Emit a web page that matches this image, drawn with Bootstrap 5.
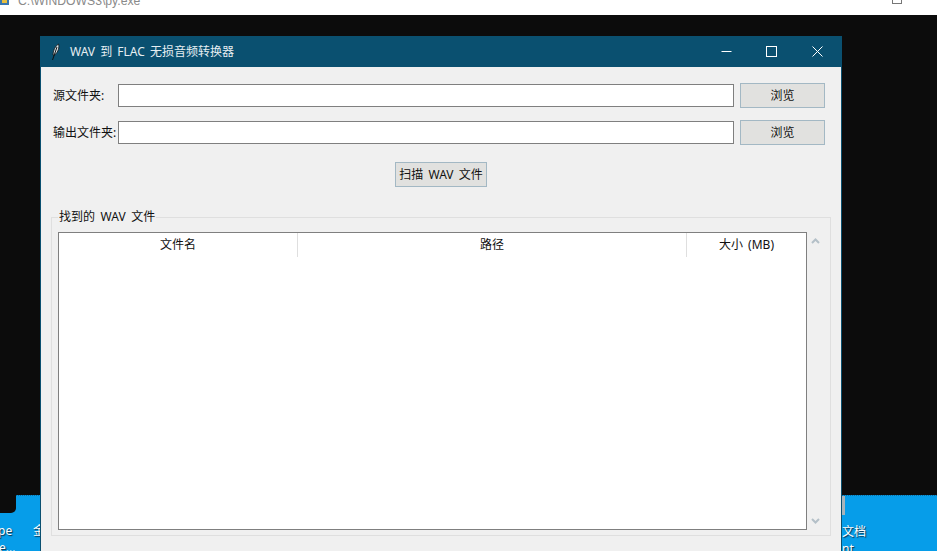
<!DOCTYPE html>
<html lang="zh"><head><meta charset="utf-8"><title>WAV 到 FLAC</title>
<link href="https://cdn.jsdelivr.net/npm/bootstrap@5.3.0/dist/css/bootstrap.min.css" rel="stylesheet">
<style>
html,body{margin:0;height:551px;overflow:hidden;background:#0c0c0c;font-family:"Noto Sans","Noto Sans CJK SC",sans-serif;font-size:12px;color:#111}
.screen{width:937px;height:551px;position:relative;overflow:hidden}
.topbar{height:15px;background:#fff;position:relative;overflow:hidden}
.toptext{position:absolute;left:18px;top:-6px;font-family:"Liberation Sans",sans-serif;font-size:12.2px;line-height:14px;color:#8a8a8a;white-space:nowrap}
.topicon{position:absolute;left:-1px;top:-4px}
.topsq{position:absolute;left:892px;top:-6px;width:10px;height:10px;border:1px solid #777}
.blackarea{height:480px;background:#0c0c0c}
.desk{height:56px;background:#069de9;position:relative;color:#fff;font-size:12px;line-height:14px;border-top:1px dotted #0b6ea3}
.desklabel{position:absolute;white-space:nowrap;text-shadow:1px 1px 1px #0a3048}
.blob{position:absolute;left:-4px;top:-1px;width:20px;height:18px;background:#0c0c0c;border-radius:0 0 5px 0}
.gbar{position:absolute;left:842px;top:0;width:3px;height:19px;background:#a9b4ba}
.win{position:absolute;left:40px;top:36px;width:802px;height:515px;background:#f0f0f0;border:solid #0a5070;border-width:0 1px}
.wtitle{height:31px;background:#0a5070;color:#e6eef2;margin:0 -1px;padding:0 2px 0 11px}
.ttext{margin-left:10px;word-spacing:2px;line-height:16px}
.wctrl{width:45.500px;height:31px}
.wbody{padding:16px 16px 0 12px}
.lbl{width:65px;white-space:nowrap;flex:none;padding-top:1px}
.ent{width:616px;height:23px;border:1px solid #7f7f7f;background:#fff;flex:none;border-radius:0;padding:0}
.bbtn{background:#e1e1df;border:1px solid #a3b8c4;border-radius:0;color:#111;font-size:12px;line-height:16px;padding:0;word-spacing:2px}
.bbtn:hover{background:#e1e1df;border-color:#a3b8c4}
.browse{width:85px;height:25px;margin-left:6px;flex:none}
.frow{height:25px;margin-bottom:12px}
.scan{width:92px;height:25px;margin-left:4px}
.scanrow{margin-top:5px;padding-top:5px}
.gframe{position:absolute;left:10px;top:181px;width:780px;height:319px;border:1px solid #dfdfdf}
.glegend{position:absolute;left:6px;top:-9px;background:#f0f0f0;padding:0 1px;line-height:16px;white-space:nowrap;word-spacing:2.500px}
.tree{position:absolute;left:6px;top:14px;width:749px;height:298px;background:#fff;border:1px solid #7f7f7f}
.thead{height:24px;line-height:24px;word-spacing:2px}
.th{text-align:center;border-right:1px solid #dfdfdf;flex:none;height:24px}
.th:last-child{border-right:0}
.sbar{position:absolute;left:756px;top:14px;width:14px;height:298px;padding:5px 0}
</style></head>
<body>
<div class="screen d-flex flex-column">
  <div class="topbar">
    <svg class="topicon" width="12" height="10" viewBox="0 0 12 10"><rect x="1" y="0" width="9" height="9" fill="#3b78b0"/><rect x="3" y="2" width="5" height="5" fill="#e8c040"/></svg>
    <span class="toptext">C:\WINDOWS3\py.exe</span>
    <span class="topsq"></span>
  </div>
  <div class="blackarea"></div>
  <div class="desk">
    <div class="blob"></div>
    <div class="gbar"></div>
    <span class="desklabel" style="left:-2px;top:28px">pe</span>
    <span class="desklabel" style="left:33px;top:28px">金</span>
    <span class="desklabel" style="left:-1px;top:45px">e...</span>
    <span class="desklabel" style="left:842px;top:29px">文档</span>
    <span class="desklabel" style="left:842px;top:46px">nt</span>
  </div>
  <div class="win d-flex flex-column">
    <div class="wtitle d-flex align-items-center">
      <svg width="9" height="18" viewBox="0 0 9 18"><path d="M2 12C2 8 4 3 7.500 1C8.500 4 7.500 9 3.500 12Z" fill="#d8e4ea" stroke="#111" stroke-width=".8"/><path d="M6 4L1.500 17" stroke="#111" stroke-width="1"/></svg>
      <span class="ttext flex-grow-1">WAV 到 FLAC 无损音频转换器</span>
      <div class="wctrl d-flex align-items-center justify-content-center"><svg width="11" height="11" viewBox="0 0 11 11"><path d="M0.500 5.500H10.500" stroke="#fff" fill="none"/></svg></div>
      <div class="wctrl d-flex align-items-center justify-content-center"><svg width="11" height="11" viewBox="0 0 11 11"><rect x="0.500" y="0.500" width="10" height="10" stroke="#fff" fill="none"/></svg></div>
      <div class="wctrl d-flex align-items-center justify-content-center"><svg width="11" height="11" viewBox="0 0 11 11"><path d="M0.500 0.500L10.500 10.500M10.500 0.500L0.500 10.500" stroke="#fff" fill="none"/></svg></div>
    </div>
    <div class="wbody">
      <div class="frow d-flex align-items-center"><span class="lbl">源文件夹:</span><div class="ent"></div><button class="btn bbtn browse">浏览</button></div>
      <div class="frow d-flex align-items-center"><span class="lbl">输出文件夹:</span><div class="ent"></div><button class="btn bbtn browse">浏览</button></div>
      <div class="scanrow d-flex justify-content-center"><button class="btn bbtn scan">扫描 WAV 文件</button></div>
    </div>
    <div class="gframe">
      <span class="glegend">找到的 WAV 文件</span>
      <div class="tree">
        <div class="thead d-flex">
          <div class="th" style="width:239px">文件名</div>
          <div class="th" style="width:389px">路径</div>
          <div class="th" style="width:119px">大小 (MB)</div>
        </div>
      </div>
      <div class="sbar d-flex flex-column justify-content-between align-items-center">
        <svg width="9" height="8" viewBox="0 0 9 8"><path d="M1 6L4.500 2.500L8 6" stroke="#b4c0c8" stroke-width="2" fill="none"/></svg>
        <svg width="9" height="8" viewBox="0 0 9 8"><path d="M1 2L4.500 5.500L8 2" stroke="#b4c0c8" stroke-width="2" fill="none"/></svg>
      </div>
    </div>
  </div>
</div>
<script src="https://cdn.jsdelivr.net/npm/bootstrap@5.3.0/dist/js/bootstrap.bundle.min.js"></script>
</body></html>
